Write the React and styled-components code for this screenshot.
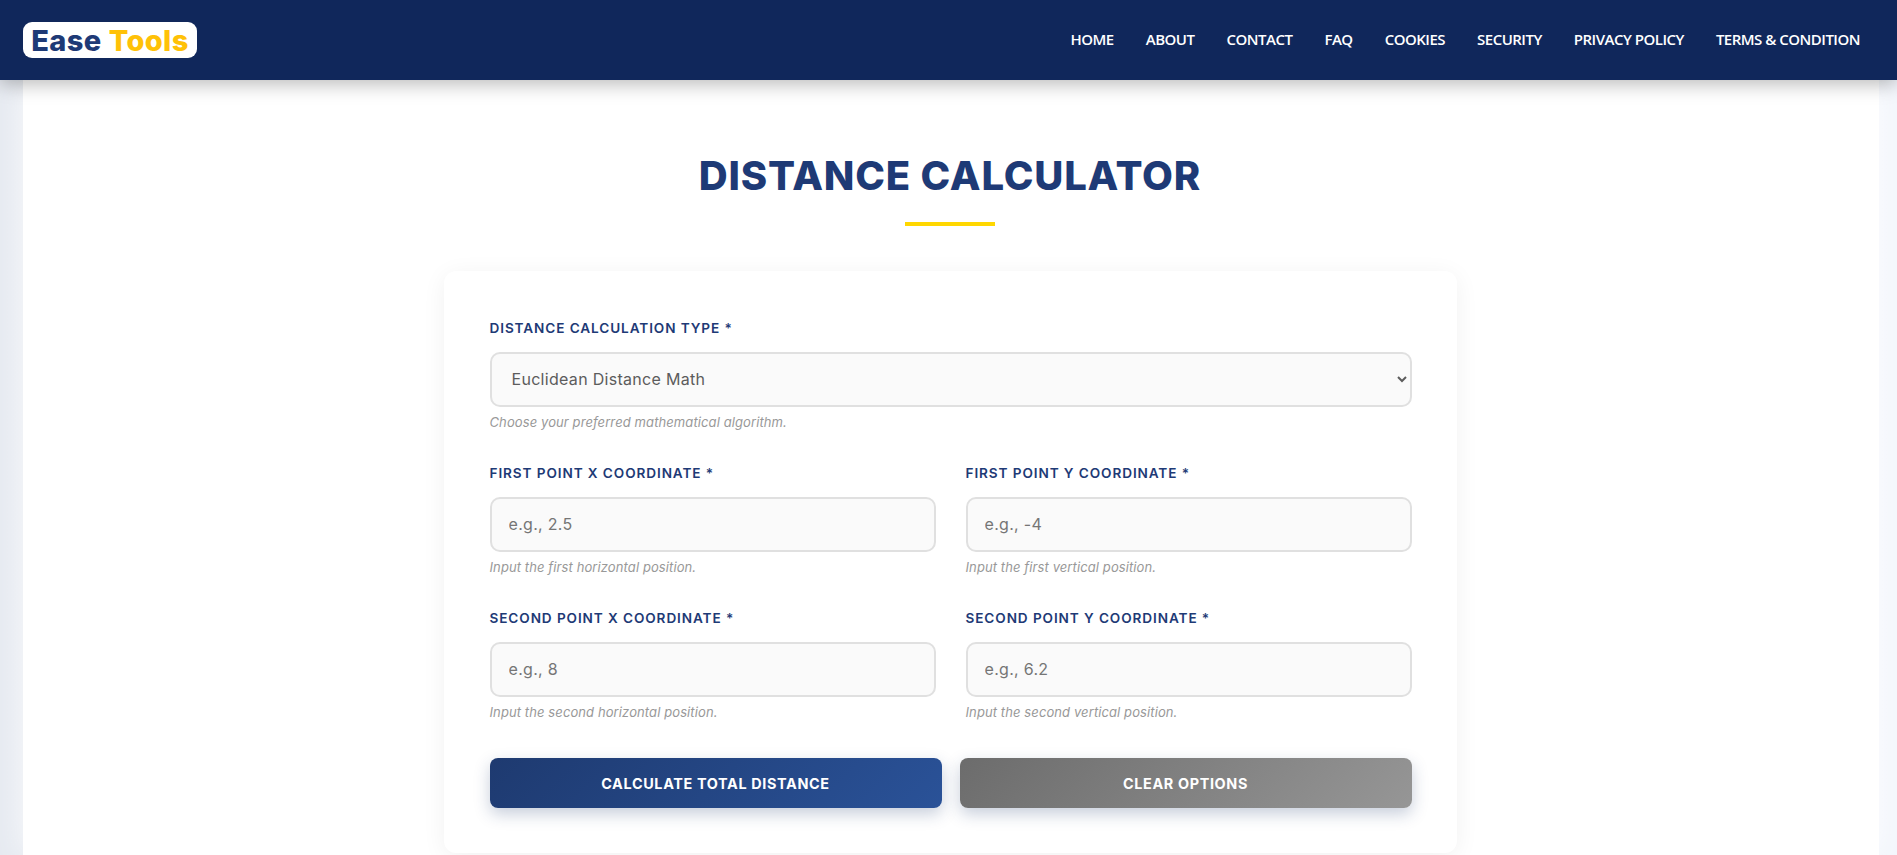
import React from "react";
import styled, { createGlobalStyle } from "styled-components";

const NAV_LINKS = ["Home", "About", "Contact", "FAQ", "Cookies", "Security", "Privacy Policy", "Terms & Condition"];

const App = () => {
  return (
    <>
      <GlobalStyle />
      <Header>
        <Logo>
          Ease <LogoAccent>Tools</LogoAccent>
        </Logo>
        <Nav>
          {NAV_LINKS.map((link) => (
            <NavLink href="#" key={link}>
              {link}
            </NavLink>
          ))}
        </Nav>
      </Header>
      <Panel>
        <Title>Distance Calculator</Title>
        <TitleBar />
        <Card>
          <Field>
            <Label>Distance Calculation Type *</Label>
            <Select defaultValue="euclidean">
              <option value="euclidean">Euclidean Distance Math</option>
              <option value="manhattan">Manhattan Distance Math</option>
            </Select>
            <Hint>Choose your preferred mathematical algorithm.</Hint>
          </Field>
          <Row>
            <Field>
              <Label>First Point X Coordinate *</Label>
              <Input type="text" placeholder="e.g., 2.5" />
              <Hint>Input the first horizontal position.</Hint>
            </Field>
            <Field>
              <Label>First Point Y Coordinate *</Label>
              <Input type="text" placeholder="e.g., -4" />
              <Hint>Input the first vertical position.</Hint>
            </Field>
          </Row>
          <Row>
            <Field>
              <Label>Second Point X Coordinate *</Label>
              <Input type="text" placeholder="e.g., 8" />
              <Hint>Input the second horizontal position.</Hint>
            </Field>
            <Field>
              <Label>Second Point Y Coordinate *</Label>
              <Input type="text" placeholder="e.g., 6.2" />
              <Hint>Input the second vertical position.</Hint>
            </Field>
          </Row>
          <Buttons>
            <Button>Calculate Total Distance</Button>
            <Button $secondary>Clear Options</Button>
          </Buttons>
        </Card>
      </Panel>
    </>
  );
};

export default App;

const GlobalStyle = createGlobalStyle`
  html, body {
    margin: 0;
    height: 100%;
    overflow: hidden;
  }
  body {
    background: linear-gradient(90deg, #e6eaf1 0%, #f3f6fc 100%);
    font-family: Inter, "Liberation Sans", sans-serif;
  }
  * {
    box-sizing: border-box;
  }
`;

const Header = styled.header`
  position: relative;
  z-index: 2;
  display: flex;
  align-items: center;
  justify-content: space-between;
  height: 80px;
  padding: 0 37px 0 23px;
  background-color: #10275b;
  box-shadow: 0 4px 18px rgba(0, 0, 0, 0.28);
`;

const Logo = styled.div`
  display: flex;
  align-items: center;
  justify-content: center;
  gap: 7px;
  width: 174px;
  height: 36px;
  background-color: #fff;
  border-radius: 9px;
  color: #1e3a76;
  font-size: 29px;
  font-weight: 800;
  letter-spacing: 0.4px;
`;

const LogoAccent = styled.span`
  color: #ffc107;
`;

const Nav = styled.nav`
  display: flex;
  gap: 32px;
  padding-bottom: 2px;
`;

const NavLink = styled.a`
  color: #fff;
  font-family: "Open Sans", sans-serif;
  font-size: 15px;
  font-weight: 600;
  letter-spacing: -0.5px;
  text-decoration: none;
  text-transform: uppercase;
`;

const Panel = styled.main`
  display: flex;
  flex-direction: column;
  align-items: center;
  height: calc(100vh - 80px);
  margin: 0 18px 0 23px;
  padding: 70px 2px 0 0;
  background-color: #fff;
  box-shadow: 0 0 30px rgba(255, 255, 255, 0.8);
`;

const Title = styled.h1`
  margin: 0;
  color: #1e3a76;
  font-size: 40px;
  line-height: 52px;
  font-weight: 800;
  letter-spacing: 0.8px;
  text-transform: uppercase;
`;

const TitleBar = styled.div`
  width: 90px;
  height: 4px;
  margin-top: 20px;
  background-color: #ffd700;
`;

const Card = styled.section`
  display: flex;
  flex-direction: column;
  gap: 31px;
  width: 1013px;
  height: 582px;
  flex-shrink: 0;
  margin-top: 45px;
  padding: 47px 45px 0 46px;
  background-color: #fff;
  border-radius: 12px;
  box-shadow: 0 4px 24px rgba(0, 0, 0, 0.06);
`;

const Row = styled.div`
  display: grid;
  grid-template-columns: 1fr 1fr;
  gap: 30px;
`;

const Field = styled.div`
  display: flex;
  flex-direction: column;
`;

const Label = styled.label`
  margin-bottom: 14px;
  color: #1e3a76;
  font-size: 13.6px;
  line-height: 20px;
  font-weight: 600;
  letter-spacing: 0.9px;
  text-transform: uppercase;
`;

const Select = styled.select`
  height: 55px;
  padding: 0 16px 2px;
  background-color: #fafafa;
  border: 2px solid #e0e0e0;
  border-radius: 10px;
  color: #5c5c5c;
  font-family: inherit;
  font-size: 16px;
  letter-spacing: 0.3px;
  outline: none;
`;

const Input = styled.input`
  height: 55px;
  padding: 0 17px 2px;
  background-color: #fafafa;
  border: 2px solid #e0e0e0;
  border-radius: 10px;
  color: #5c5c5c;
  font-family: inherit;
  font-size: 16px;
  letter-spacing: 0.3px;
  outline: none;

  &::placeholder {
    color: #757575;
  }
`;

const Hint = styled.small`
  margin-top: 6px;
  margin-bottom: 1px;
  color: #999;
  font-size: 13px;
  line-height: 18px;
  font-style: italic;
  letter-spacing: 0.1px;
`;

const Buttons = styled.div`
  display: grid;
  grid-template-columns: 1fr 1fr;
  gap: 18px;
  margin-top: 5px;
`;

const Button = styled.button`
  height: 50px;
  border: none;
  border-radius: 8px;
  background: ${(props) =>
    props.$secondary
      ? "linear-gradient(135deg, #6c6c6c, #969696)"
      : "linear-gradient(135deg, #1e3a70, #2a5298)"};
  box-shadow: 0 6px 16px rgba(30, 58, 112, 0.25);
  color: #fff;
  font-family: inherit;
  font-size: 14.4px;
  font-weight: 700;
  letter-spacing: 0.65px;
  text-transform: uppercase;
  cursor: pointer;
`;
